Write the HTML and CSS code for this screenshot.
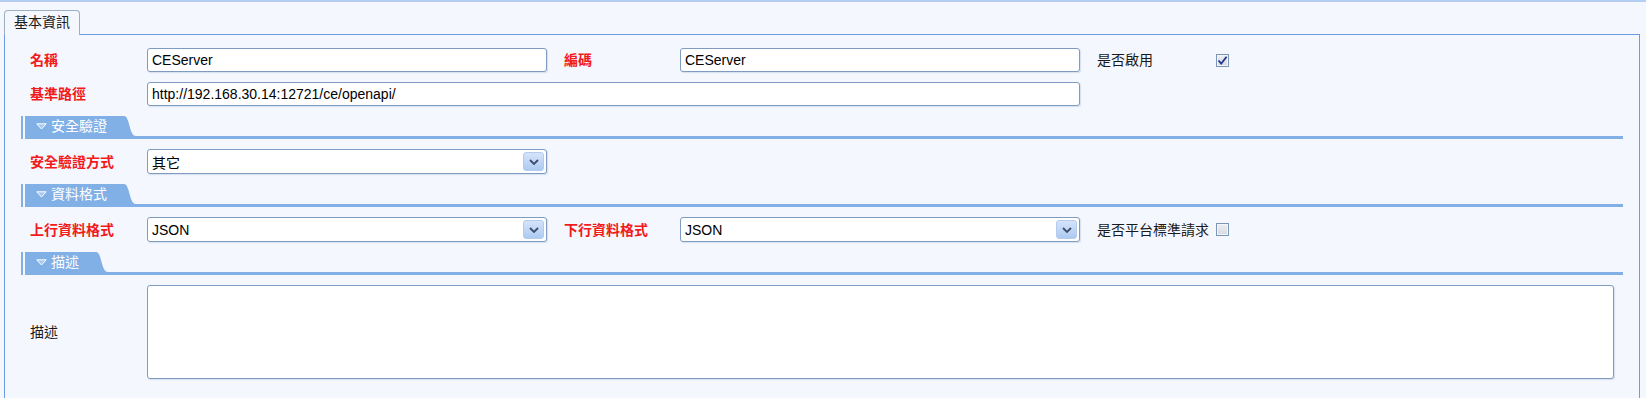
FILE: index.html
```html
<!DOCTYPE html>
<html lang="zh-Hant">
<head>
    <meta charset="utf-8">
    <title>基本資訊</title>
    <link rel="stylesheet" href="styles.css">
</head>
<body>
    <div class="topbar"></div>

    <div class="tabs">
        <div class="tab">基本資訊</div>
    </div>

    <div class="panel">
        <div class="form">
            <div class="lbl req">名稱</div>
            <div class="cell"><input class="text" type="text" value="CEServer"></div>
            <div class="lbl req side">編碼</div>
            <div class="cell"><input class="text" type="text" value="CEServer"></div>
            <div class="lbl side">是否啟用</div>
            <div class="cell"><span class="check"><svg width="11" height="11" viewBox="0 0 11 11"><path d="M1.5 5.5 L4.2 8.6 L9.6 1.8" fill="none" stroke="#27358a" stroke-width="1.8"/></svg></span></div>

            <div class="lbl req">基準路徑</div>
            <div class="cell wide"><input class="text" type="text" value="http://192.168.30.14:12721/ce/openapi/"></div>
        </div>

        <div class="sec">
            <div class="sec-tab">
                <svg class="tri" width="11" height="7" viewBox="0 0 11 7"><path d="M0.8 0.8 H10.2 L5.5 6 Z" fill="#a6c8f1" stroke="#fff" stroke-width="1"/></svg>
                <span>安全驗證</span>
            </div>
            <svg class="sec-curve" width="13" height="23" viewBox="0 0 13 23"><path d="M0 0 H1 C7 0 6 20 13 20 V23 H0 Z" fill="#80b0e6"/></svg>
            <div class="sec-line"></div>
        </div>

        <div class="form">
            <div class="lbl req">安全驗證方式</div>
            <div class="cell">
                <div class="select"><span>其它</span><span class="arrow"><svg width="10" height="6" viewBox="0 0 10 6"><path d="M1 1 L5 5 L9 1" fill="none" stroke="#3d4d6c" stroke-width="1.8"/></svg></span></div>
            </div>
        </div>

        <div class="sec">
            <div class="sec-tab">
                <svg class="tri" width="11" height="7" viewBox="0 0 11 7"><path d="M0.8 0.8 H10.2 L5.5 6 Z" fill="#a6c8f1" stroke="#fff" stroke-width="1"/></svg>
                <span>資料格式</span>
            </div>
            <svg class="sec-curve" width="13" height="23" viewBox="0 0 13 23"><path d="M0 0 H1 C7 0 6 20 13 20 V23 H0 Z" fill="#80b0e6"/></svg>
            <div class="sec-line"></div>
        </div>

        <div class="form">
            <div class="lbl req">上行資料格式</div>
            <div class="cell">
                <div class="select"><span>JSON</span><span class="arrow"><svg width="10" height="6" viewBox="0 0 10 6"><path d="M1 1 L5 5 L9 1" fill="none" stroke="#3d4d6c" stroke-width="1.8"/></svg></span></div>
            </div>
            <div class="lbl req side">下行資料格式</div>
            <div class="cell">
                <div class="select"><span>JSON</span><span class="arrow"><svg width="10" height="6" viewBox="0 0 10 6"><path d="M1 1 L5 5 L9 1" fill="none" stroke="#3d4d6c" stroke-width="1.8"/></svg></span></div>
            </div>
            <div class="lbl side">是否平台標準請求</div>
            <div class="cell"><span class="check"></span></div>
        </div>

        <div class="sec">
            <div class="sec-tab">
                <svg class="tri" width="11" height="7" viewBox="0 0 11 7"><path d="M0.8 0.8 H10.2 L5.5 6 Z" fill="#a6c8f1" stroke="#fff" stroke-width="1"/></svg>
                <span>描述</span>
            </div>
            <svg class="sec-curve" width="13" height="23" viewBox="0 0 13 23"><path d="M0 0 H1 C7 0 6 20 13 20 V23 H0 Z" fill="#80b0e6"/></svg>
            <div class="sec-line"></div>
        </div>

        <div class="form">
            <div class="lbl">描述</div>
            <div class="cell full"><textarea class="area"></textarea></div>
        </div>
    </div>
</body>
</html>
```

FILE: styles.css
```css
:root {
    --ff: "Liberation Sans", "Noto Sans CJK TC", sans-serif;
    --bg: #f5f7fe;
    --sec: #80b0e6;
    --field-bd: #7f9cc0;
}

html, body {
    overflow: hidden;
}

body {
    font-family: var(--ff);
    font-size: 14px;
    color: #1a1a1a;
    background: var(--bg);

    margin: 0;
}

.topbar {
    height: 2px;
    background: #b4cef2;
}

.tabs {
    display: flex;
    padding: 8px 0 0 4px;
}
.tab {
    position: relative;
    z-index: 1;

    height: 24px;
    line-height: 23px;
    padding: 0 9px;
    margin-bottom: -1px;

    border: 1px solid #9eafc5;
    border-bottom: none;
    border-radius: 4px 4px 0 0;
    background: var(--bg);
}

.panel {
    width: 1636px;
    margin-left: 4px;
    box-sizing: border-box;
    min-height: 420px;

    border: 1px solid #6b9be0;
    padding: 13px 16px 30px 16px;
}

.form {
    display: grid;
    grid-template-columns: 117px 400px 133px 400px 136px 1fr;
    row-gap: 10px;
    align-items: center;

    padding: 0 9px;
}

.lbl {
    line-height: 18px;
    white-space: nowrap;
}
.lbl.req {
    color: #f21a1a;
    font-weight: bold;
}
.lbl.side {
    padding-left: 17px;
}

.cell {
    display: flex;
    align-items: center;
}
.cell.wide {
    grid-column: 2 / 5;
}
.cell.full {
    grid-column: 2 / -1;
}

.text {
    font-family: var(--ff);
    font-size: 14px;
    color: #000;

    width: 100%;
    height: 24px;
    box-sizing: border-box;
    padding: 0 4px;
    margin: 0;

    border: 1px solid var(--field-bd);
    border-radius: 3px;
    background: #fff;
    box-shadow: 1px 1px 1px rgba(120, 150, 190, 0.25);
    outline: none;
}

.select {
    display: flex;
    align-items: center;
    justify-content: space-between;

    width: 100%;
    height: 25px;
    box-sizing: border-box;
    padding: 0 2px 0 4px;

    color: #000;
    border: 1px solid var(--field-bd);
    border-radius: 3px;
    background: #fff;
    box-shadow: 1px 1px 1px rgba(120, 150, 190, 0.25);
}
.select .arrow {
    display: flex;
    justify-content: center;
    align-items: center;

    width: 21px;
    height: 19px;
    box-sizing: border-box;

    border: 1px solid #b3cbec;
    border-radius: 3px;
    background: linear-gradient(#d5e4fa, #adcaf2);
}

.check {
    display: inline-flex;
    justify-content: center;
    align-items: center;

    width: 13px;
    height: 13px;
    box-sizing: border-box;

    border: 1px solid #7a96b8;
    box-shadow: inset 0 0 0 1px #f4f5f8;
    background: linear-gradient(#eceef2, #d6dae2);
}

.area {
    font-family: var(--ff);
    font-size: 14px;

    width: 100%;
    height: 94px;
    box-sizing: border-box;
    margin: 0;
    resize: none;

    border: 1px solid var(--field-bd);
    border-radius: 3px;
    background: #fff;
    box-shadow: 1px 1px 1px rgba(120, 150, 190, 0.25);
    outline: none;
}

.sec {
    display: flex;
    height: 23px;
    margin: 10px 0;

    border-left: 2px solid var(--sec);
    padding-left: 2px;
}
.sec-tab {
    display: flex;
    align-items: center;
    gap: 4px;

    height: 23px;
    box-sizing: border-box;
    padding: 0 16px 3px 11px;

    color: #fff;
    background: var(--sec);
    line-height: 18px;
}
.sec-tab .tri {
    flex: none;
}
.sec-curve {
    flex: none;
    display: block;
}
.sec-line {
    flex: 1;
    border-bottom: 3px solid var(--sec);
}
```
